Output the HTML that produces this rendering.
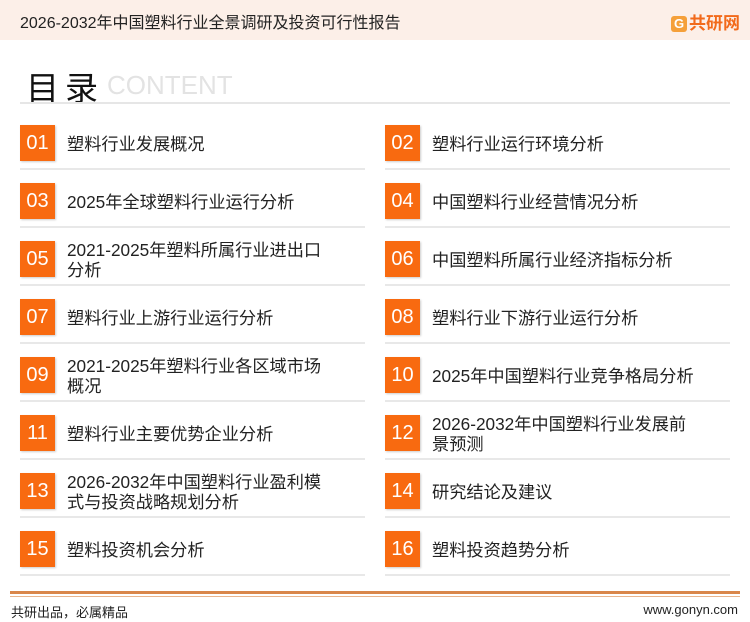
<!DOCTYPE html><html><head><meta charset="utf-8"><style>
body{margin:0;width:750px;height:622px;background:#fff;position:relative;overflow:hidden;font-family:"Liberation Sans","Noto Sans CJK SC",sans-serif;color:#222}
.hd{position:absolute;left:0;top:0;width:750px;height:40px;background:#fcefe8}
.hd .t{position:absolute;left:20px;top:9px;font-size:16px}
.logo{position:absolute;right:10px;top:9px;font-size:17px;font-weight:bold;color:#f26a1b}
.logo b{display:inline-block;width:16px;height:16px;background:#f5a03a;border-radius:3px;color:#fff;font-size:13px;text-align:center;line-height:16px;vertical-align:1px;margin-right:2px}
.tt{position:absolute;left:26px;top:62px;font-size:33px;color:#111;letter-spacing:6px}
.ct{position:absolute;left:107px;top:70px;font-size:26px;color:#e3e3e3}
.ln{position:absolute;left:20px;top:102px;width:710px;height:2px;background:#e6e6e6}
.it{position:absolute;width:345px;height:58px}
.it .n{position:absolute;left:0;top:11px;width:35px;height:36px;background:#f86a10;color:#fff;font-size:20px;text-align:center;line-height:36px;box-shadow:1px 1px 2px rgba(0,0,0,.2)}
.it .x{position:absolute;left:47px;top:1px;height:58px;width:290px;display:flex;align-items:center;font-size:17.2px;line-height:20px}
.it:after{content:"";position:absolute;left:0;right:0;top:54px;height:2px;background:#e8e8e8}
.f1{position:absolute;left:10px;top:591px;width:730px;height:3px;background:#d9864a}
.f2{position:absolute;left:10px;top:596px;width:730px;height:1px;background:#e9b58d}
.fl{position:absolute;left:11px;top:602px;font-size:13px}
.fr{position:absolute;right:12px;top:602px;font-size:13px}
</style></head><body>
<div class="hd"><div class="t">2026-2032年中国塑料行业全景调研及投资可行性报告</div><div class="logo"><b>G</b>共研网</div></div>
<div class="tt">目录</div><div class="ct">CONTENT</div><div class="ln"></div>
<div class="it" style="left:20px;top:114px"><div class="n">01</div><div class="x">塑料行业发展概况</div></div>
<div class="it" style="left:385px;top:114px"><div class="n">02</div><div class="x">塑料行业运行环境分析</div></div>
<div class="it" style="left:20px;top:172px"><div class="n">03</div><div class="x">2025年全球塑料行业运行分析</div></div>
<div class="it" style="left:385px;top:172px"><div class="n">04</div><div class="x">中国塑料行业经营情况分析</div></div>
<div class="it" style="left:20px;top:230px"><div class="n">05</div><div class="x">2021-2025年塑料所属行业进出口<br>分析</div></div>
<div class="it" style="left:385px;top:230px"><div class="n">06</div><div class="x">中国塑料所属行业经济指标分析</div></div>
<div class="it" style="left:20px;top:288px"><div class="n">07</div><div class="x">塑料行业上游行业运行分析</div></div>
<div class="it" style="left:385px;top:288px"><div class="n">08</div><div class="x">塑料行业下游行业运行分析</div></div>
<div class="it" style="left:20px;top:346px"><div class="n">09</div><div class="x">2021-2025年塑料行业各区域市场<br>概况</div></div>
<div class="it" style="left:385px;top:346px"><div class="n">10</div><div class="x">2025年中国塑料行业竞争格局分析</div></div>
<div class="it" style="left:20px;top:404px"><div class="n">11</div><div class="x">塑料行业主要优势企业分析</div></div>
<div class="it" style="left:385px;top:404px"><div class="n">12</div><div class="x">2026-2032年中国塑料行业发展前<br>景预测</div></div>
<div class="it" style="left:20px;top:462px"><div class="n">13</div><div class="x">2026-2032年中国塑料行业盈利模<br>式与投资战略规划分析</div></div>
<div class="it" style="left:385px;top:462px"><div class="n">14</div><div class="x">研究结论及建议</div></div>
<div class="it" style="left:20px;top:520px"><div class="n">15</div><div class="x">塑料投资机会分析</div></div>
<div class="it" style="left:385px;top:520px"><div class="n">16</div><div class="x">塑料投资趋势分析</div></div>
<div class="f1"></div><div class="f2"></div>
<div class="fl">共研出品，必属精品</div><div class="fr">www.gonyn.com</div>
</body></html>
